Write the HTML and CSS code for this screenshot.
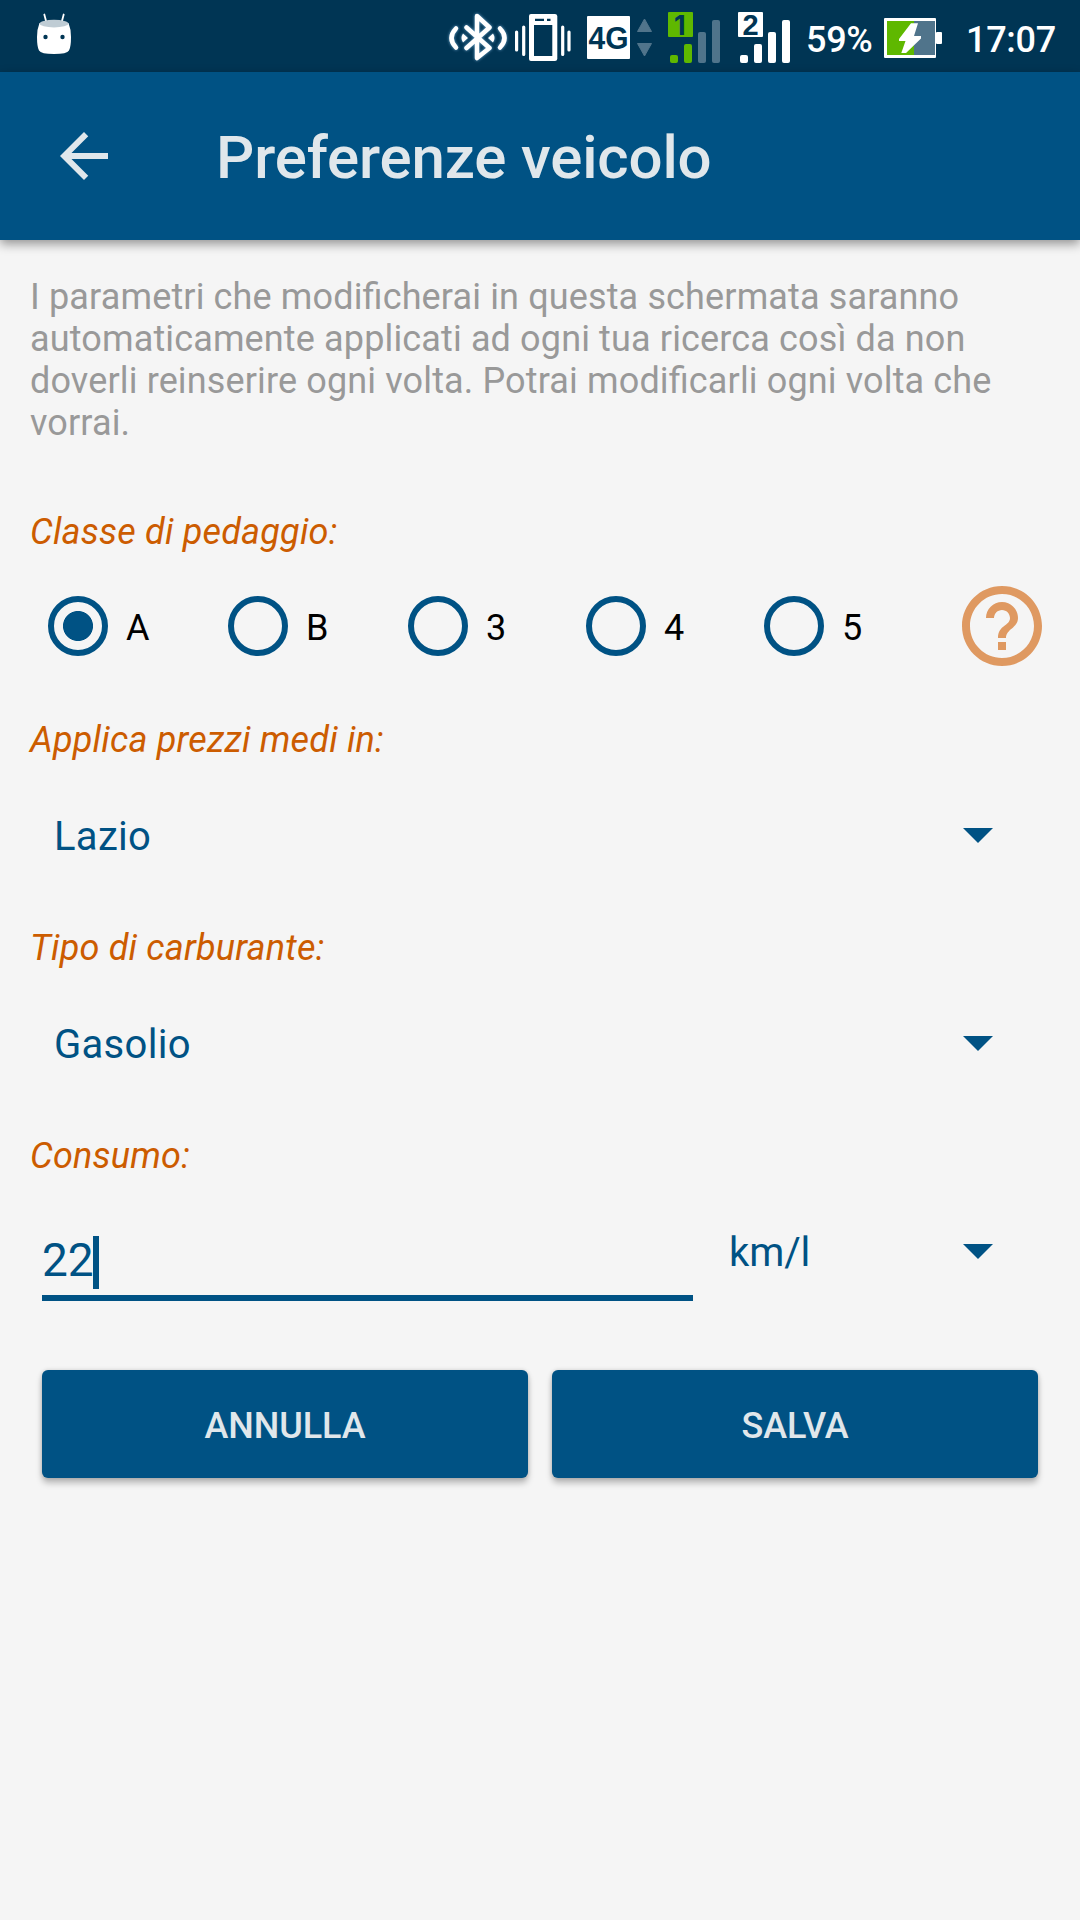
FILE: index.html
```html
<!DOCTYPE html>
<html lang="it">
<head>
    <meta charset="UTF-8">
    <meta name="viewport" content="width=device-width, initial-scale=1.0">
    <title>Preferenze veicolo</title>
    <link rel="stylesheet" href="styles.css">
</head>
<body>
    <div class="status-bar">
        <svg class="android" width="36" height="44" viewBox="36 12 36 44">
            <path d="M44.300 14.500l2 7.500M63.700 14.500l-2 7.500" stroke="#fff" stroke-width="1.800" stroke-linecap="round"/>
            <path d="M39.500 23Q54 29 68.500 23Q71 29 71 37Q71 47 69 50.500Q67 54 54 54Q41 54 39 50.500Q37 47 37 37Q37 29 39.500 23z" fill="#fff"/>
            <ellipse cx="54" cy="23.600" rx="14.500" ry="3.800" fill="#bfccd4"/>
            <circle cx="45.500" cy="37" r="2.200" fill="#003554"/>
            <circle cx="62.500" cy="37" r="2.200" fill="#003554"/>
        </svg>
        <div class="status-icons">
            <svg class="bluetooth" width="58" height="50" viewBox="449 12 58 50">
                <path d="M466.500 27.500L489.500 48L477 58V16L489.500 27.500L466.500 48" fill="none" stroke="#fff" stroke-width="4.500" stroke-linecap="round" stroke-linejoin="round"/>
                <path d="M500 28.500Q509 38 500 47.500M456 28.500Q447 38 456 47.500" fill="none" stroke="#fff" stroke-width="4.500" stroke-linecap="round"/>
                <path d="M488 38L493 33.500Q496 38 493 42.500zM468 38L463 33.500Q460 38 463 42.500z" fill="#fff"/>
            </svg>
            <svg class="vibrate" width="57" height="50" viewBox="514 12 57 50">
                <path fill-rule="evenodd" d="M531 14H555Q557 14 557.300 16V59Q557 61 555 61H531Q529 61 529 59V16Q529 14 531 14zM534 25V56H552.300V25zM535 18.700V21H544V18.700zM547 18.700V21H550.500V18.700z" fill="#fff"/>
                <path d="M516.600 32V50M523.700 27V54.500M562.700 27V54.500M569 32V50" stroke="#fff" stroke-width="3.200" stroke-linecap="round"/>
            </svg>
            <svg class="network" width="66" height="50" viewBox="587 12 66 50">
                <rect x="587" y="16" width="43" height="43" rx="1" fill="#fff"/>
                <text x="588.500" y="48.800" font-size="31" textLength="40" lengthAdjust="spacingAndGlyphs" class="badge-text">4G</text>
                <path d="M644.500 19L651.500 31.500H637.500zM644.500 56L651.500 43.500H637.500z" fill="#50748b" stroke="#50748b" stroke-linejoin="round"/>
            </svg>
            <svg class="sim" width="52" height="52" viewBox="668 12 52 52">
                <rect x="668" y="12" width="25" height="25" rx="1" fill="#5fb800"/>
                <text x="674" y="34.700" font-size="27" class="badge-text sim-one">1</text>
                <rect x="670" y="55" width="8" height="8" rx="2" fill="#5fb800"/>
                <rect x="684" y="44" width="8" height="19" rx="2" fill="#5fb800"/>
                <rect x="698" y="32" width="8" height="31" rx="2" fill="#50748b"/>
                <rect x="712" y="20" width="8" height="43" rx="2" fill="#50748b"/>
            </svg>
            <svg class="sim" width="52" height="52" viewBox="738 12 52 52">
                <rect x="738" y="12" width="25" height="25" rx="1" fill="#fff"/>
                <text x="742.500" y="34.700" font-size="29" class="badge-text">2</text>
                <rect x="740" y="55" width="8" height="8" rx="2" fill="#fff"/>
                <rect x="754" y="44" width="8" height="19" rx="2" fill="#fff"/>
                <rect x="768" y="32" width="8" height="31" rx="2" fill="#fff"/>
                <rect x="782" y="20" width="8" height="43" rx="2" fill="#fff"/>
            </svg>
            <span class="battery-level">59%</span>
            <svg class="battery" width="58" height="40" viewBox="884 18 58 40">
                <rect x="884" y="18" width="52" height="40" rx="1" fill="#fff"/>
                <rect x="936" y="32" width="6" height="12" rx="1" fill="#fff"/>
                <rect x="887" y="21" width="27" height="34" fill="#5fb800"/>
                <rect x="914" y="21" width="21" height="34" fill="#50748b"/>
                <path d="M911 23.300H918L914 36H921V38.500L906 53H901.300L905.500 41H899V39z" fill="#fff"/>
            </svg>
            <span class="clock">17:07</span>
        </div>
    </div>

    <div class="toolbar">
        <svg class="back" width="72" height="72" viewBox="0 0 24 24">
            <path d="M20 11H7.830l5.590-5.590L12 4l-8 8 8 8 1.410-1.410L7.830 13H20v-2z" fill="#e0e7eb"/>
        </svg>
        <h1>Preferenze veicolo</h1>
    </div>

    <div class="content">
        <p class="intro">I parametri che modificherai in questa schermata saranno automaticamente applicati ad ogni tua ricerca così da non doverli reinserire ogni volta. Potrai modificarli ogni volta che vorrai.</p>

        <h2>Classe di pedaggio:</h2>
        <div class="toll-row">
            <div class="toll-options">
                <label><input type="radio" name="toll" checked><span>A</span></label>
                <label><input type="radio" name="toll"><span>B</span></label>
                <label><input type="radio" name="toll"><span>3</span></label>
                <label><input type="radio" name="toll"><span>4</span></label>
                <label><input type="radio" name="toll"><span>5</span></label>
            </div>
            <svg class="help" width="96" height="96" viewBox="0 0 24 24">
                <path d="M11 18h2v-2h-2v2zm1-16C6.480 2 2 6.480 2 12s4.480 10 10 10 10-4.480 10-10S17.520 2 12 2zm0 18c-4.410 0-8-3.590-8-8s3.590-8 8-8 8 3.590 8 8-3.590 8-8 8zm0-14c-2.210 0-4 1.790-4 4h2c0-1.100.9-2 2-2s2 .9 2 2c0 2-3 1.750-3 5h2c0-2.250 3-2.500 3-5 0-2.210-1.790-4-4-4z" fill="#df9961"/>
            </svg>
        </div>

        <h2>Applica prezzi medi in:</h2>
        <div class="field-row">
            <div class="spinner"><span>Lazio</span><i class="caret-down"></i></div>
        </div>

        <h2>Tipo di carburante:</h2>
        <div class="field-row">
            <div class="spinner"><span>Gasolio</span><i class="caret-down"></i></div>
        </div>

        <h2>Consumo:</h2>
        <div class="field-row">
            <div class="edit-text"><span>22</span><i class="cursor"></i></div>
            <div class="spinner unit"><span>km/l</span><i class="caret-down"></i></div>
        </div>

        <div class="buttons">
            <button>ANNULLA</button>
            <button>SALVA</button>
        </div>
    </div>
</body>
</html>
```
FILE: styles.css
```css
* {
    box-sizing: border-box;
}
body {
    margin: 0;
    min-height: 1920px;
    font-family: Roboto, "Liberation Sans", sans-serif;
    font-size: 36px;
    line-height: 42px;
    background-color: #f5f5f5;
}
svg {
    display: block;
    flex: none;
    overflow: visible;
}

/* status bar */
.status-bar {
    display: flex;
    justify-content: space-between;
    height: 72px;
    padding: 12px 24px 0 36px;
    background-color: #003554;
    color: #fff;
    font-weight: 500;
}
.status-icons {
    display: flex;
    align-items: flex-start;
}
.bluetooth {
    margin-right: 7px;
    filter: drop-shadow(0 0 1.5px rgba(160, 215, 255, 0.7));
}
.vibrate {
    margin-right: 16px;
}
.network {
    margin-right: 15px;
}
.sim {
    margin-right: 18px;
}
.badge-text {
    font-family: "Liberation Sans", sans-serif;
    font-weight: bold;
    fill: #003554;
}
.sim-one {
    font-family: Inter, sans-serif;
}
.battery-level {
    width: 78px;
    margin-top: 7px;
    margin-left: -2px;
    letter-spacing: -0.3px;
}
.battery {
    margin-top: 6px;
}
.clock {
    width: 90px;
    margin-top: 7px;
    margin-left: 24px;
    letter-spacing: -0.3px;
}

/* toolbar */
.toolbar {
    display: flex;
    align-items: center;
    height: 168px;
    padding-left: 48px;
    background-color: #005284;
    box-shadow: 0 4px 10px rgba(0, 0, 0, 0.4);
}
h1 {
    margin: 3px 0 0 96px;
    font-size: 60px;
    line-height: 70px;
    font-weight: 500;
    letter-spacing: -0.15px;
    color: #e0e7eb;
}

/* form */
.content {
    padding: 36px 30px 0;
}
.intro {
    margin: 0 0 67px;
    letter-spacing: 0.14px;
    font-feature-settings: "liga" 1;
    color: #999;
}
h2 {
    margin: 0;
    font-size: 36px;
    line-height: 42px;
    font-weight: 400;
    font-style: italic;
    letter-spacing: 0.2px;
    color: #cc5c00;
}
.toll-row {
    display: flex;
    align-items: center;
    height: 146px;
    margin: 0 0 20px 18px;
}
.toll-options {
    display: grid;
    grid-template-columns: 180px 180px 178px 178px 190px;
}
label {
    display: flex;
    align-items: center;
    gap: 18px;
    color: #000;
}
label span {
    margin-top: 3px;
}
input[type="radio"] {
    appearance: none;
    width: 60px;
    height: 60px;
    margin: 0;
    border: 6px solid #005284;
    border-radius: 50%;
}
input[type="radio"]:checked {
    background: radial-gradient(circle, #005284 14.6px, transparent 15.4px);
}
.field-row {
    display: flex;
    align-items: center;
    height: 150px;
    margin-bottom: 16px;
}
.spinner {
    display: flex;
    flex: 1;
    align-items: center;
    justify-content: space-between;
    padding: 0 57px 0 24px;
    font-size: 40px;
    line-height: 48px;
    letter-spacing: 0.3px;
    color: #005284;
}
.spinner span {
    padding-top: 2px;
}
.caret-down {
    margin-bottom: 2px;
    border: 15px solid transparent;
    border-top-color: #005284;
    border-bottom: 0;
}
.edit-text {
    display: flex;
    align-items: flex-end;
    width: 651px;
    height: 65px;
    margin: 33px 0 0 12px;
    padding-bottom: 6px;
    border-bottom: 6px solid #005284;
    font-size: 46px;
    line-height: 53px;
    color: #005284;
}
.edit-text span {
    padding-bottom: 2px;
}
.unit {
    padding-left: 36px;
    letter-spacing: -0.1px;
}
.cursor {
    width: 6px;
    height: 53px;
    margin-left: -1px;
    background-color: #005284;
}
.buttons {
    display: flex;
    gap: 24px;
    margin: 43px 12px 0;
}
.field-row:nth-last-child(2) {
    margin-bottom: 0;
}
button {
    flex: 1;
    height: 108px;
    padding: 4px 0 0;
    border: none;
    border-radius: 6px;
    font-family: inherit;
    font-size: 36px;
    font-weight: 500;
    letter-spacing: -0.1px;
    background-color: #005284;
    color: #e0e7eb;
    box-shadow: 0 5px 6px rgba(0, 0, 0, 0.25), 0 0 4px rgba(0, 0, 0, 0.15);
}
```
